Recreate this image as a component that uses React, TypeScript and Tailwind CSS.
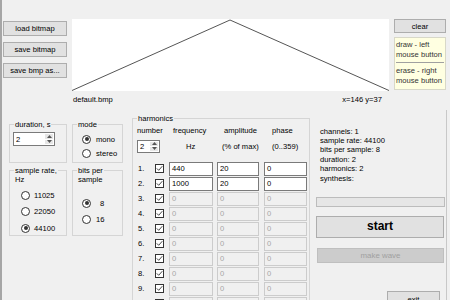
const Btn = ({ children, className = "" }: { children: React.ReactNode; className?: string }) => (
  <button
    type="button"
    className={`flex shrink-0 items-center justify-center border border-[#adadad] bg-[#e1e1e1] ${className}`}
  >
    {children}
  </button>
);

const Radio = ({ checked = false }: { checked?: boolean }) => (
  <span className="flex h-[9px] w-[9px] shrink-0 items-center justify-center rounded-full border border-[#333333] bg-white">
    {checked && <span className="h-[4px] w-[4px] rounded-full bg-[#333333]" />}
  </span>
);

const Check = () => (
  <span className="flex h-[9px] w-[9px] items-center justify-center border border-[#333333] bg-white">
    <svg width="7" height="7" viewBox="0 0 7 7">
      <polyline points="0.8,3.4 2.7,5.3 6.3,1.2" fill="none" stroke="#333333" strokeWidth="0.9" />
    </svg>
  </span>
);

const Spin = ({ value, className = "" }: { value: string; className?: string }) => (
  <div className={`flex border border-[#7a7a7a] bg-white ${className}`}>
    <span className="flex flex-1 items-center pl-[2px]">{value}</span>
    <div className="my-[1px] mr-[1px] flex w-[8px] flex-col gap-[1px]">
      <span className="flex flex-1 items-center justify-center bg-[#e6e6e6]">
        <svg width="5" height="3" viewBox="0 0 5 3">
          <polygon points="2.5,0 5,3 0,3" fill="#555555" />
        </svg>
      </span>
      <span className="flex flex-1 items-center justify-center bg-[#e6e6e6]">
        <svg width="5" height="3" viewBox="0 0 5 3">
          <polygon points="0,0 5,0 2.5,3" fill="#555555" />
        </svg>
      </span>
    </div>
  </div>
);

const Field = ({ value, disabled, className = "" }: { value: string; disabled?: boolean; className?: string }) => (
  <div
    className={`flex h-[14px] items-center pl-[2px] ${
      disabled ? "border border-[#cccccc] bg-[#f0f0f0] text-[#a6a6a6]" : "border border-[#7a7a7a] bg-white"
    } ${className}`}
  >
    {value}
  </div>
);

const rows = [
  { f: "440", a: "20", p: "0", on: true },
  { f: "1000", a: "20", p: "0", on: true },
  { f: "0", a: "0", p: "0" },
  { f: "0", a: "0", p: "0" },
  { f: "0", a: "0", p: "0" },
  { f: "0", a: "0", p: "0" },
  { f: "0", a: "0", p: "0" },
  { f: "0", a: "0", p: "0" },
  { f: "0", a: "0", p: "0" },
  { f: "0", a: "0", p: "0" },
];

export default function App() {
  return (
    <div className="h-[300px] w-[450px] overflow-hidden border-l-2 border-[#a6a6a6] bg-[#f0f0f0] font-['Liberation_Sans',Arial,sans-serif] text-[7.6px] leading-[9px] text-black">
      {/* top: bitmap area */}
      <div className="flex h-[110px] pt-[19px]">
        <div className="ml-[1px] mt-[2px] flex w-[64px] flex-col gap-[6px]">
          <Btn className="h-[15px]">load bitmap</Btn>
          <Btn className="h-[15px]">save bitmap</Btn>
          <Btn className="h-[15px]">save bmp as...</Btn>
        </div>
        <div className="ml-[5px] w-[317px]">
          <div className="h-[72px] bg-white">
            <svg width="317" height="72" viewBox="0 0 317 72">
              <polyline points="0,71.5 158,1 317,71.5" fill="none" stroke="#555555" strokeWidth="1" />
            </svg>
          </div>
          <div className="mt-[4px] flex justify-between pl-[1px] pr-[7px]">
            <span>default.bmp</span>
            <span>x=146 y=37</span>
          </div>
        </div>
        <div className="ml-[5px] w-[52px]">
          <Btn className="h-[14px] w-full">clear</Btn>
          <div className="mt-[4px] h-[53px] border border-[#d8d8c8] bg-[#ffffe1] px-[1px] pt-[2px] leading-[9.5px] text-[#333333]">
            <div>draw - left</div>
            <div>mouse button</div>
            <div className="my-[3px] border-t border-[#a0a0a0]" />
            <div>erase - right</div>
            <div>mouse button</div>
          </div>
        </div>
      </div>

      {/* bottom: settings */}
      <div className="flex items-start">
        <div className="ml-[7px] mt-[10px] grid w-[114px] grid-cols-[58px_51px] content-start items-start gap-x-[5px] gap-y-[3px]">
          <fieldset className="h-[43px] border border-[#d5d5d5]">
            <legend className="ml-[4px] px-[1px]">duration, s</legend>
            <Spin value="2" className="ml-[3px] mt-[3px] h-[14px] w-[42px]" />
          </fieldset>
          <fieldset className="h-[43px] border border-[#d5d5d5]">
            <legend className="ml-[4px] px-[1px]">mode</legend>
            <div className="mt-[3px] pl-[9px]">
              <div className="flex h-[14px] items-center gap-[5px]">
                <Radio checked />
                <span>mono</span>
              </div>
              <div className="flex h-[14px] items-center gap-[5px]">
                <Radio />
                <span>stereo</span>
              </div>
            </div>
          </fieldset>
          <fieldset className="h-[70px] border border-[#d5d5d5]">
            <legend className="ml-[4px] px-[1px]">sample rate,</legend>
            <div className="pl-[5px]">Hz</div>
            <div className="mt-[3px] pl-[11px]">
              {["11025", "22050", "44100"].map((r) => (
                <div key={r} className="flex h-[16.5px] items-center gap-[4px]">
                  <Radio checked={r === "44100"} />
                  <span>{r}</span>
                </div>
              ))}
            </div>
          </fieldset>
          <fieldset className="h-[70px] border border-[#d5d5d5]">
            <legend className="ml-[4px] px-[1px]">bits per</legend>
            <div className="pl-[5px]">sample</div>
            <div className="mt-[11px] pl-[9px]">
              <div className="flex h-[16px] items-center">
                <Radio checked />
                <span className="ml-[9px]">8</span>
              </div>
              <div className="flex h-[16px] items-center">
                <Radio />
                <span className="ml-[5px]">16</span>
              </div>
            </div>
          </fieldset>
        </div>

        <fieldset className="ml-[9px] mt-[4px] h-[200px] w-[178px] shrink-0 border border-[#d5d5d5]">
          <legend className="ml-[4px] px-[1px]">harmonics</legend>
          <div className="mt-[3px] grid grid-cols-[32px_48px_47px_43px] pl-[4px]">
            <span>number</span>
            <span className="pl-[4px]">frequency</span>
            <span className="pl-[7px]">amplitude</span>
            <span className="pl-[8px]">phase</span>
          </div>
          <div className="mt-[4.5px] grid h-[13px] grid-cols-[32px_48px_47px_43px] items-center pl-[4px]">
            <Spin value="2" className="h-[13px] w-[23px]" />
            <span className="pl-[17px]">Hz</span>
            <span className="pl-[5px]">(% of max)</span>
            <span className="pl-[8px]">(0..359)</span>
          </div>
          <div className="mt-[9px] pl-[4px]">
            {rows.map((r, i) => (
              <div key={i} className="grid h-[15px] grid-cols-[32px_48px_47px_43px] items-start">
                <div className="flex h-[14px] items-center">
                  <span className="w-[18px] pl-[1px]">{i + 1}.</span>
                  <Check />
                </div>
                <Field value={r.f} disabled={!r.on} className="w-[44px]" />
                <Field value={r.a} disabled={!r.on} className="w-[42px]" />
                <Field value={r.p} disabled={!r.on} className="w-[43px]" />
              </div>
            ))}
          </div>
        </fieldset>

        <div className="ml-[6px] flex h-[200px] w-[131px] flex-col border-r border-[#c8c8c8] pt-[16.5px]">
          <div className="shrink-0 pl-[4px] leading-[9.4px]">
            <div>channels: 1</div>
            <div>sample rate: 44100</div>
            <div>bits per sample: 8</div>
            <div>duration: 2</div>
            <div>harmonics: 2</div>
            <div>synthesis:</div>
          </div>
          <div className="mt-[14px] h-[10px] w-[129px] shrink-0 border border-[#bcbcbc] bg-[#e6e6e6]" />
          <Btn className="mt-[9px] h-[22px] w-[128px] text-[12px] font-bold">start</Btn>
          <div className="ml-[1px] mt-[10px] flex h-[15px] w-[127px] shrink-0 items-center justify-center border border-[#bfbfbf] bg-[#cccccc] text-[7.9px] text-[#a0a0a0]">
            make wave
          </div>
          <Btn className="ml-[71px] mt-[28px] h-[16px] w-[53px] items-start pt-[3px]">exit</Btn>
        </div>
      </div>
    </div>
  );
}
